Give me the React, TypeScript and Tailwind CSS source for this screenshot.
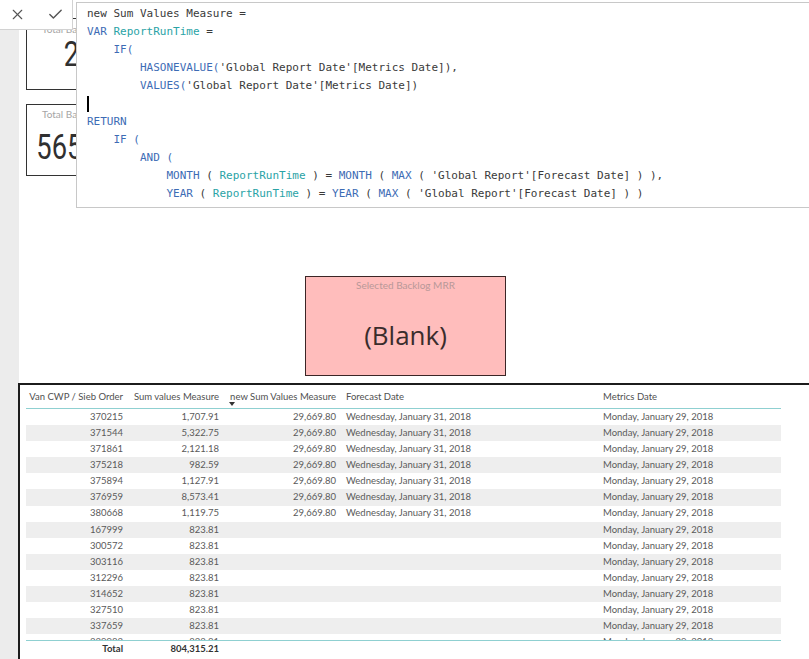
import { X, Check } from "lucide-react";

type Seg = [string, "k" | "v" | "t"];

const code: Seg[][] = [
  [["new Sum Values Measure =", "t"]],
  [["VAR ", "k"], ["ReportRunTime", "v"], [" =", "t"]],
  [["    ", "t"], ["IF(", "k"]],
  [["        ", "t"], ["HASONEVALUE(", "k"], ["'Global Report Date'[Metrics Date]),", "t"]],
  [["        ", "t"], ["VALUES(", "k"], ["'Global Report Date'[Metrics Date])", "t"]],
  [["", "t"]],
  [["RETURN", "k"]],
  [["    ", "t"], ["IF (", "k"]],
  [["        ", "t"], ["AND (", "k"]],
  [
    ["            ", "t"],
    ["MONTH", "k"],
    [" ( ", "t"],
    ["ReportRunTime", "v"],
    [" ) = ", "t"],
    ["MONTH", "k"],
    [" ( ", "t"],
    ["MAX", "k"],
    [" ( 'Global Report'[Forecast Date] ) ),", "t"],
  ],
  [
    ["            ", "t"],
    ["YEAR", "k"],
    [" ( ", "t"],
    ["ReportRunTime", "v"],
    [" ) = ", "t"],
    ["YEAR", "k"],
    [" ( ", "t"],
    ["MAX", "k"],
    [" ( 'Global Report'[Forecast Date] ) )", "t"],
  ],
];

const segColor = {
  k: "text-[#3d6cb5]",
  v: "text-[#2aa3a6]",
  t: "text-[#3a3a3a]",
};

const FC = "Wednesday, January 31, 2018";
const MD = "Monday, January 29, 2018";

const rows: string[][] = [
  ["370215", "1,707.91", "29,669.80", FC, MD],
  ["371544", "5,322.75", "29,669.80", FC, MD],
  ["371861", "2,121.18", "29,669.80", FC, MD],
  ["375218", "982.59", "29,669.80", FC, MD],
  ["375894", "1,127.91", "29,669.80", FC, MD],
  ["376959", "8,573.41", "29,669.80", FC, MD],
  ["380668", "1,119.75", "29,669.80", FC, MD],
  ["167999", "823.81", "", "", MD],
  ["300572", "823.81", "", "", MD],
  ["303116", "823.81", "", "", MD],
  ["312296", "823.81", "", "", MD],
  ["314652", "823.81", "", "", MD],
  ["327510", "823.81", "", "", MD],
  ["337659", "823.81", "", "", MD],
  ["339982", "823.81", "", "", MD],
];

const cols = "grid grid-cols-[102px_96px_117px_257px_183px] whitespace-nowrap";

const App = () => {
  return (
    <div className="relative w-[809px] h-[659px] overflow-hidden bg-white flex">
      {/* left pane strip */}
      <div className="w-[19px] h-full bg-[#ececec] shrink-0" />

      {/* report canvas */}
      <div className="relative flex-1 h-full bg-white">
        {/* card 1 (mostly hidden) */}
        <div className="absolute left-[7px] top-[18px] w-[180px] h-[72px] border border-[#333] bg-white">
          <div className="pt-[3px] pl-[15px] text-[10px] text-[#a5a5a5] font-['Lato',sans-serif] whitespace-nowrap">
            Total Backlog Count
          </div>
          <div className="pl-[47px] -mt-[2px] text-[35px] leading-[40px] text-[#303030] font-['Roboto',sans-serif] scale-x-[0.78] origin-left whitespace-nowrap">
            2,118
          </div>
        </div>

        {/* card 2 */}
        <div className="absolute left-[7px] top-[104px] w-[180px] h-[72px] border border-[#333] bg-white">
          <div className="pt-[2px] pl-[15px] text-[10px] text-[#a5a5a5] font-['Lato',sans-serif] whitespace-nowrap">
            Total Backlog MRR
          </div>
          <div className="pl-[12px] mt-[6px] text-[35px] leading-[40px] text-[#303030] font-['Roboto',sans-serif] scale-x-[0.78] origin-left whitespace-nowrap">
            565,131.98
          </div>
        </div>

        {/* blank card */}
        <div className="absolute left-[286px] top-[276px] w-[201px] h-[100px] border border-[#3b2626] bg-[#ffbdbc] flex flex-col items-center">
          <div className="pt-[1px] text-[10px] text-[#b89898] font-['Lato',sans-serif]">
            Selected Backlog MRR
          </div>
          <div className="mt-[25px] text-[26px] leading-[34px] text-[#3a2c2c] font-['Open_Sans',sans-serif]">
            (Blank)
          </div>
        </div>

        {/* table visual */}
        <div className="absolute left-[-1px] top-[383px] right-0 bottom-0 border-t-2 border-l-2 border-[#1c1c1c] bg-white font-['Lato',sans-serif]">
          <div className="ml-[6px] w-[755px] text-[9.5px]">
            <div className={`${cols} h-[24px] items-end pb-[4px] border-b border-[#8fd0d1] text-[#505050]`}>
              <div className="text-right pr-[5px]">Van CWP / Sieb Order</div>
              <div className="text-right pr-[5px]">Sum values Measure</div>
              <div className="relative text-right pr-[5px]">
                new Sum Values Measure
                <span className="absolute left-[5px] top-[12px] w-0 h-0 border-l-[3px] border-r-[3px] border-t-[4px] border-l-transparent border-r-transparent border-t-[#333]" />
              </div>
              <div className="pl-[5px]">Forecast Date</div>
              <div className="pl-[5px]">Metrics Date</div>
            </div>
            <div className="h-[231px] overflow-hidden">
              {rows.map((r, i) => (
                <div
                  key={i}
                  className={`${cols} h-[16.1px] items-center text-[#5a5a5a] ${
                    i % 2 === 1 ? "bg-[#eeeeee]" : "bg-white"
                  }`}
                >
                  <div className="text-right pr-[5px]">{r[0]}</div>
                  <div className="text-right pr-[5px]">{r[1]}</div>
                  <div className="text-right pr-[5px]">{r[2]}</div>
                  <div className="pl-[5px]">{r[3]}</div>
                  <div className="pl-[5px]">{r[4]}</div>
                </div>
              ))}
            </div>
            <div className={`${cols} h-[17px] items-center border-t border-[#8fd0d1] font-bold text-[#333]`}>
              <div className="text-right pr-[5px]">Total</div>
              <div className="text-right pr-[5px]">804,315.21</div>
              <div />
              <div />
              <div />
            </div>
          </div>
        </div>
      </div>

      {/* formula bar buttons */}
      <div className="absolute left-0 top-0 w-[73px] h-[30px] bg-white border-b border-r border-[#d2d2d2] flex items-center">
        <div className="w-[37px] flex justify-center">
          <X size={17} strokeWidth={1.6} className="text-[#555]" />
        </div>
        <div className="w-[37px] flex justify-center pl-[3px]">
          <Check size={17} strokeWidth={2} className="text-[#555]" />
        </div>
      </div>

      {/* DAX editor */}
      <div className="absolute left-[76px] top-[2px] w-[745px] h-[206px] bg-white border border-[#c8c8c8] pl-[10px] pt-[2px] font-['DejaVu_Sans_Mono',monospace] text-[11px] leading-[18px]">
        {code.map((line, i) => (
          <div key={i} className="relative h-[18px] whitespace-pre">
            {line.map(([s, c], j) => (
              <span key={j} className={segColor[c]}>
                {s}
              </span>
            ))}
            {i === 5 && <span className="absolute left-0 top-[1px] w-[2px] h-[16px] bg-black" />}
          </div>
        ))}
      </div>
    </div>
  );
};

export default App;
